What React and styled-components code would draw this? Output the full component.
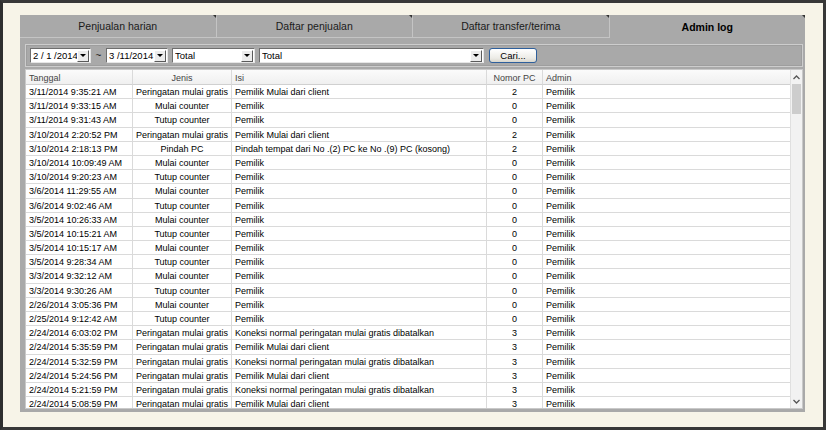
import React from "react";
import styled, { createGlobalStyle, css } from "styled-components";

const GlobalStyle = createGlobalStyle`
  html, body { margin: 0; padding: 0; background: #f7f4e8; }
  * { box-sizing: border-box; }
`;

// === Data ===
const rows = [
  ["3/11/2014 9:35:21 AM", "Peringatan mulai gratis", "Pemilik Mulai dari client", "2"],
  ["3/11/2014 9:33:15 AM", "Mulai counter", "Pemilik", "0"],
  ["3/11/2014 9:31:43 AM", "Tutup counter", "Pemilik", "0"],
  ["3/10/2014 2:20:52 PM", "Peringatan mulai gratis", "Pemilik Mulai dari client", "2"],
  ["3/10/2014 2:18:13 PM", "Pindah PC", "Pindah tempat dari No .(2) PC ke No .(9) PC (kosong)", "2"],
  ["3/10/2014 10:09:49 AM", "Mulai counter", "Pemilik", "0"],
  ["3/10/2014 9:20:23 AM", "Tutup counter", "Pemilik", "0"],
  ["3/6/2014 11:29:55 AM", "Mulai counter", "Pemilik", "0"],
  ["3/6/2014 9:02:46 AM", "Tutup counter", "Pemilik", "0"],
  ["3/5/2014 10:26:33 AM", "Mulai counter", "Pemilik", "0"],
  ["3/5/2014 10:15:21 AM", "Tutup counter", "Pemilik", "0"],
  ["3/5/2014 10:15:17 AM", "Mulai counter", "Pemilik", "0"],
  ["3/5/2014 9:28:34 AM", "Tutup counter", "Pemilik", "0"],
  ["3/3/2014 9:32:12 AM", "Mulai counter", "Pemilik", "0"],
  ["3/3/2014 9:30:26 AM", "Tutup counter", "Pemilik", "0"],
  ["2/26/2014 3:05:36 PM", "Mulai counter", "Pemilik", "0"],
  ["2/25/2014 9:12:42 AM", "Tutup counter", "Pemilik", "0"],
  ["2/24/2014 6:03:02 PM", "Peringatan mulai gratis", "Koneksi normal peringatan mulai gratis dibatalkan", "3"],
  ["2/24/2014 5:35:59 PM", "Peringatan mulai gratis", "Pemilik Mulai dari client", "3"],
  ["2/24/2014 5:32:59 PM", "Peringatan mulai gratis", "Koneksi normal peringatan mulai gratis dibatalkan", "3"],
  ["2/24/2014 5:24:56 PM", "Peringatan mulai gratis", "Pemilik Mulai dari client", "3"],
  ["2/24/2014 5:21:59 PM", "Peringatan mulai gratis", "Koneksi normal peringatan mulai gratis dibatalkan", "3"],
  ["2/24/2014 5:08:59 PM", "Peringatan mulai gratis", "Pemilik Mulai dari client", "3"],
];

const tabs = ["Penjualan harian", "Daftar penjualan", "Daftar transfer/terima", "Admin log"];

const COLS = "107px 99px 255px 56px 1fr";

// === Frame ===
const Frame = styled.div`
  width: 826px;
  height: 430px;
  border: 3px solid #383838;
  border-left-color: #2e2e2e;
  background: #f7f4e8;
  padding: 12px 18px 15px 17px;
  font-family: "Liberation Sans", Arial, sans-serif;
`;

const Panel = styled.div`
  height: 100%;
  background: #a9a9a9;
  display: flex;
  flex-direction: column;
`;

// === Tabs ===
const TabBar = styled.div`
  flex: none;
  display: flex;
  height: 23px;
`;

const Tab = styled.div`
  position: relative;
  flex: 1;
  display: flex;
  align-items: center;
  justify-content: center;
  font-size: 10.5px;
  color: #1a1a1a;
  border-radius: 2px 3px 0 0;
  ${({ $active }) =>
    $active
      ? css`
          font-weight: bold;
          color: #000;
        `
      : css`
          border-right: 1px solid #c4c4c4;
          border-bottom: 1px solid #c4c4c4;
        `}

  &::after {
    content: "";
    position: absolute;
    top: 0;
    right: 0;
    border-top: 3px solid #333;
    border-left: 3px solid transparent;
  }
`;

// === Body ===
const Body = styled.div`
  flex: 1;
  min-height: 0;
  display: flex;
  flex-direction: column;
  gap: 2px;
  padding: 6px 2px 3px 5px;
`;

const FilterBar = styled.div`
  flex: none;
  height: 23px;
  display: flex;
  align-items: center;
  gap: 4px;
  padding: 0 4px;
  border: 1px solid #cdcdcd;
  box-shadow: inset 0 0 0 1px #9e9e9e;
`;

const Field = styled.div`
  height: 15px;
  width: ${({ $w }) => $w}px;
  background: #fff;
  border: 1px solid;
  border-color: #6e6e6e #e6e6e6 #e6e6e6 #6e6e6e;
  display: flex;
  align-items: center;
  font-size: 9.5px;
  color: #000;
  padding-left: 2px;
`;

const FieldText = styled.span`
  flex: 1;
  white-space: pre;
  overflow: hidden;
`;

const DropButton = styled.span`
  width: 12px;
  height: 12px;
  margin-right: 1px;
  background: #ececec;
  border: 1px solid;
  border-color: #fff #5a5a5a #5a5a5a #fff;
  display: flex;
  align-items: center;
  justify-content: center;

  &::before {
    content: "";
    border-top: 3px solid #000;
    border-left: 3px solid transparent;
    border-right: 3px solid transparent;
  }
`;

const Tilde = styled.span`
  width: 7px;
  text-align: center;
  font-size: 10px;
  color: #222;
`;

const SearchButton = styled.button`
  margin-left: 1px;
  width: 48px;
  height: 15px;
  padding: 0;
  border: 1px solid #2e5f9c;
  border-radius: 3px;
  background: linear-gradient(#ffffff, #ecebe6 70%, #d8d6cc);
  font-family: inherit;
  font-size: 9.5px;
  color: #000;
`;

// === Table ===
const TableBox = styled.div`
  flex: 1;
  min-height: 0;
  display: flex;
  background: #fff;
  border: 1px solid #c9c9c9;
  overflow: hidden;
`;

const TableMain = styled.div`
  flex: 1;
  display: flex;
  flex-direction: column;
  overflow: hidden;
`;

const Row = styled.div`
  flex: none;
  display: grid;
  grid-template-columns: ${COLS};
  height: ${({ $header }) => ($header ? "15px" : "14.2px")};
  background: ${({ $header }) => ($header ? "linear-gradient(#fbfbfb, #efefef)" : "#fff")};
  color: ${({ $header }) => ($header ? "#444" : "#000")};
`;

const Cell = styled.div`
  font-size: 9px;
  line-height: 12px;
  padding: 1px 3px 0;
  white-space: nowrap;
  overflow: hidden;
  border-right: 1px solid #dadada;
  border-bottom: 1px solid #dadada;
  text-align: ${({ $align }) => $align || "left"};
  &:last-child { border-right: none; }
`;

const HeadCell = styled(Cell)`
  padding-top: 2px;
  border-bottom-color: #d0d0d0;
`;

const ScrollBar = styled.div`
  flex: none;
  width: 12px;
  background: #f2f2f2;
  border-left: 1px solid #e0e0e0;
  display: flex;
  flex-direction: column;
`;

const ScrollArrow = styled.div`
  height: 14px;
  display: flex;
  align-items: center;
  justify-content: center;
  svg { display: block; }
`;

const Thumb = styled.div`
  height: 30px;
  margin: 0 1px;
  background: #cdcdcd;
`;

const Track = styled.div`
  flex: 1;
`;

function Chevron({ up }) {
  return (
    <svg width="7" height="5" viewBox="0 0 7 5">
      <path
        d={up ? "M0.5 4 L3.5 1 L6.5 4" : "M0.5 1 L3.5 4 L6.5 1"}
        stroke="#555"
        strokeWidth="1.3"
        fill="none"
      />
    </svg>
  );
}

export default function App() {
  return (
    <>
      <GlobalStyle />
      <Frame>
        <Panel>
          <TabBar>
            {tabs.map((t, i) => (
              <Tab key={t} $active={i === tabs.length - 1}>
                {t}
              </Tab>
            ))}
          </TabBar>
          <Body>
            <FilterBar>
              <Field $w={61}>
                <FieldText>2 / 1 /2014</FieldText>
                <DropButton />
              </Field>
              <Tilde>~</Tilde>
              <Field $w={62}>
                <FieldText>3 /11/2014</FieldText>
                <DropButton />
              </Field>
              <Field $w={83}>
                <FieldText>Total</FieldText>
                <DropButton />
              </Field>
              <Field $w={225}>
                <FieldText>Total</FieldText>
                <DropButton />
              </Field>
              <SearchButton>Cari...</SearchButton>
            </FilterBar>
            <TableBox>
              <TableMain>
                <Row $header>
                  <HeadCell>Tanggal</HeadCell>
                  <HeadCell $align="center">Jenis</HeadCell>
                  <HeadCell>Isi</HeadCell>
                  <HeadCell $align="center">Nomor PC</HeadCell>
                  <HeadCell>Admin</HeadCell>
                </Row>
                {rows.map((r, i) => (
                  <Row key={i}>
                    <Cell>{r[0]}</Cell>
                    <Cell $align="center">{r[1]}</Cell>
                    <Cell>{r[2]}</Cell>
                    <Cell $align="center">{r[3]}</Cell>
                    <Cell>Pemilik</Cell>
                  </Row>
                ))}
              </TableMain>
              <ScrollBar>
                <ScrollArrow>
                  <Chevron up />
                </ScrollArrow>
                <Thumb />
                <Track />
                <ScrollArrow>
                  <Chevron />
                </ScrollArrow>
              </ScrollBar>
            </TableBox>
          </Body>
        </Panel>
      </Frame>
    </>
  );
}
